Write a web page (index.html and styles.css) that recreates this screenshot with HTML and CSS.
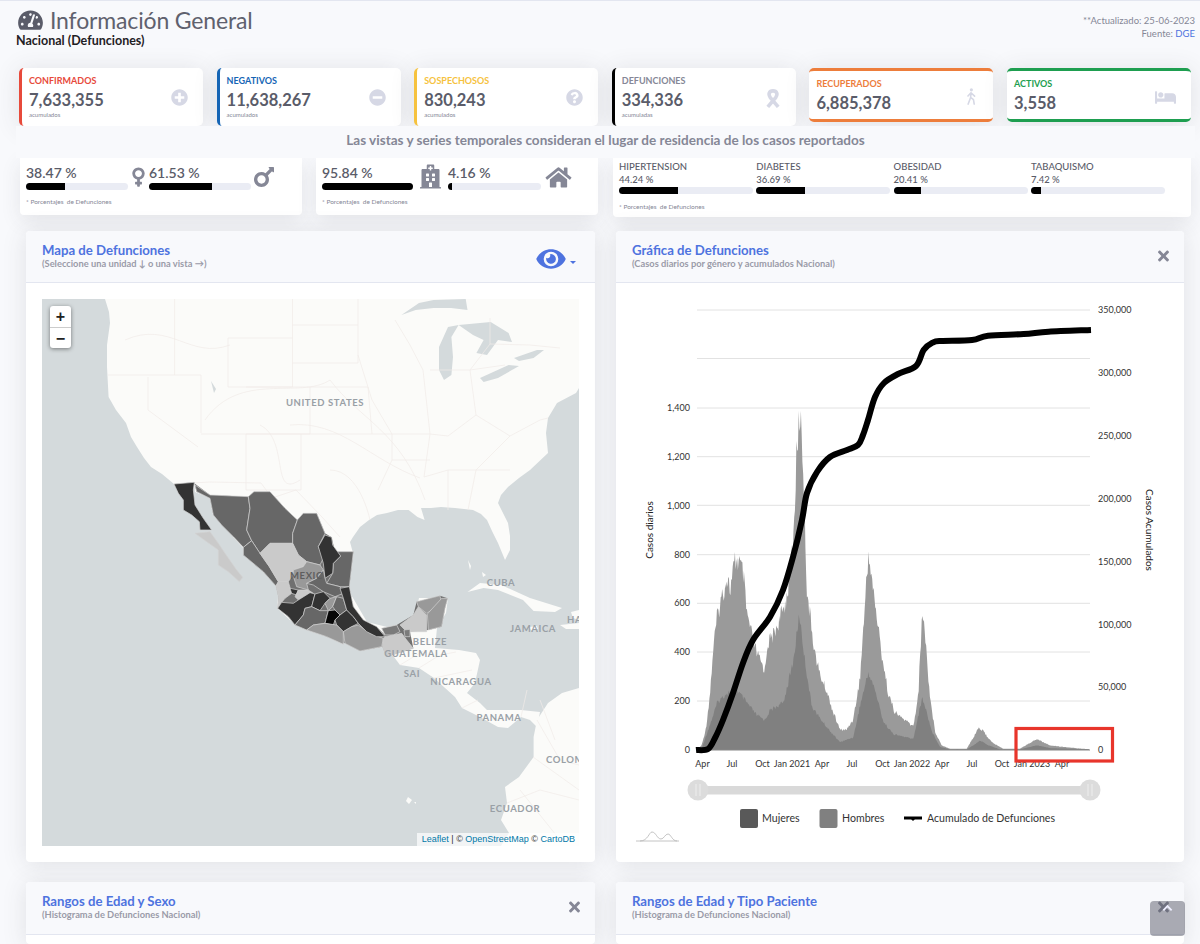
FILE: index.html
```html
<!DOCTYPE html>
<html lang="es">
<head>
<meta charset="utf-8">
<title>Información General</title>
<link rel="stylesheet" href="styles.css">
</head>
<body>
<svg class="sprite" aria-hidden="true">
  <symbol id="i-gauge" viewBox="0 0 576 512"><path d="M288 32C128.94 32 0 160.94 0 320c0 52.8 14.25 102.26 39.06 144.8 5.61 9.62 16.3 15.2 27.44 15.2h443c11.14 0 21.83-5.58 27.44-15.2C561.75 422.26 576 372.8 576 320c0-159.06-128.94-288-288-288zm0 64c14.71 0 26.58 10.13 30.32 23.65-1.11 2.26-2.64 4.23-3.45 6.67l-9.22 27.67c-5.13 3.49-10.97 6.01-17.64 6.01-17.67 0-32-14.33-32-32S270.33 96 288 96zM96 384c-17.67 0-32-14.33-32-32s14.33-32 32-32 32 14.33 32 32-14.33 32-32 32zm48-160c-17.67 0-32-14.33-32-32s14.33-32 32-32 32 14.33 32 32-14.33 32-32 32zm246.77-72.41l-61.33 184C343.13 347.33 352 364.54 352 384c0 11.72-3.38 22.55-8.88 32H232.88c-5.5-9.45-8.88-20.28-8.88-32 0-33.94 26.5-61.43 59.9-63.59l61.34-184.01c4.17-12.56 17.73-19.45 30.36-15.17 12.57 4.19 19.35 17.79 15.17 30.36zm14.66 57.2l15.52-46.55c3.47-1.29 7.13-2.23 11.05-2.23 17.67 0 32 14.33 32 32s-14.33 32-32 32c-11.38-.01-20.89-6.28-26.57-15.22zM480 384c-17.67 0-32-14.33-32-32s14.33-32 32-32 32 14.33 32 32-14.33 32-32 32z"/></symbol>
  <symbol id="i-plus" viewBox="0 0 512 512"><path d="M256 8C119 8 8 119 8 256s111 248 248 248 248-111 248-248S393 8 256 8zm144 276c0 6.6-5.4 12-12 12h-92v92c0 6.6-5.4 12-12 12h-56c-6.6 0-12-5.4-12-12v-92h-92c-6.6 0-12-5.4-12-12v-56c0-6.6 5.4-12 12-12h92v-92c0-6.6 5.4-12 12-12h56c6.6 0 12 5.4 12 12v92h92c6.6 0 12 5.4 12 12v56z"/></symbol>
  <symbol id="i-minus" viewBox="0 0 512 512"><path d="M256 8C119 8 8 119 8 256s111 248 248 248 248-111 248-248S393 8 256 8zM124 296c-6.6 0-12-5.4-12-12v-56c0-6.6 5.4-12 12-12h264c6.6 0 12 5.4 12 12v56c0 6.6-5.4 12-12 12H124z"/></symbol>
  <symbol id="i-question" viewBox="0 0 512 512"><path d="M504 256c0 136.997-111.043 248-248 248S8 392.997 8 256C8 119.083 119.043 8 256 8s248 111.083 248 248zM262.655 90c-54.497 0-89.255 22.957-116.549 63.758-3.536 5.286-2.353 12.415 2.715 16.258l34.699 26.31c5.205 3.947 12.621 3.008 16.665-2.122 17.864-22.658 30.113-35.797 57.303-35.797 20.429 0 45.698 13.148 45.698 32.958 0 14.976-12.363 22.667-32.534 33.976C247.128 238.528 216 254.941 216 296v4c0 6.627 5.373 12 12 12h56c6.627 0 12-5.373 12-12v-1.333c0-28.462 83.186-29.647 83.186-106.667 0-58.002-60.165-106-116.531-106zM256 338c-25.365 0-46 20.635-46 46 0 25.364 20.635 46 46 46s46-20.636 46-46c0-25.365-20.635-46-46-46z"/></symbol>
  <symbol id="i-ribbon" viewBox="0 0 16 20"><path class="stroke-icon" d="M2.500 18.800 L10.800 9 C13.400 5.500 12 2 8 2 C4 2 2.600 5.500 5.200 9 L13.500 18.800"/></symbol>
  <symbol id="i-walk" viewBox="0 0 12 18"><circle cx="6.400" cy="1.900" r="1.700"/><path class="stroke-thin" d="M6 5 L5.600 10 L3 17 M5.600 10 L8.600 12.400 L9.400 17 M6 5 L2.800 8.400 M6 5 L9.800 8.600"/></symbol>
  <symbol id="i-bed" viewBox="0 0 640 512"><path d="M176 256c44.11 0 80-35.89 80-80s-35.89-80-80-80-80 35.89-80 80 35.89 80 80 80zm352-128H304c-8.84 0-16 7.16-16 16v144H64V80c0-8.84-7.16-16-16-16H16C7.16 64 0 71.16 0 80v352c0 8.84 7.16 16 16 16h32c8.84 0 16-7.16 16-16v-48h512v48c0 8.84 7.16 16 16 16h32c8.84 0 16-7.16 16-16V240c0-61.86-50.14-112-112-112z"/></symbol>
  <symbol id="i-venus" viewBox="0 0 288 512"><path d="M288 176c0-79.5-64.5-144-144-144S0 96.5 0 176c0 68.5 47.9 125.9 112 140.4V368H76c-6.6 0-12 5.4-12 12v40c0 6.6 5.4 12 12 12h36v36c0 6.6 5.4 12 12 12h40c6.6 0 12-5.4 12-12v-36h36c6.6 0 12-5.4 12-12v-40c0-6.6-5.4-12-12-12h-36v-51.6c64.1-14.5 112-71.9 112-140.4zm-224 0c0-44.1 35.9-80 80-80s80 35.9 80 80-35.9 80-80 80-80-35.9-80-80z"/></symbol>
  <symbol id="i-mars" viewBox="0 64 384 384"><path d="M372 64h-79c-10.7 0-16 12.9-8.5 20.5l16.9 16.9-80.7 80.7c-22.2-14-48.5-22.1-76.7-22.1C64.5 160 0 224.5 0 304s64.5 144 144 144 144-64.5 144-144c0-28.2-8.1-54.5-22.1-76.7l80.7-80.7 16.9 16.9c7.6 7.6 20.5 2.2 20.5-8.5V76c0-6.6-5.4-12-12-12zM144 384c-44.1 0-80-35.9-80-80s35.9-80 80-80 80 35.9 80 80-35.9 80-80 80z"/></symbol>
  <symbol id="i-hospital" viewBox="0 0 448 512"><path d="M448 492v20H0v-20c0-6.627 5.373-12 12-12h20V120c0-13.255 10.745-24 24-24h88V24c0-13.255 10.745-24 24-24h112c13.255 0 24 10.745 24 24v72h88c13.255 0 24 10.745 24 24v360h20c6.627 0 12 5.373 12 12zM308 192h-40c-6.627 0-12 5.373-12 12v40c0 6.627 5.373 12 12 12h40c6.627 0 12-5.373 12-12v-40c0-6.627-5.373-12-12-12zm-168 64h40c6.627 0 12-5.373 12-12v-40c0-6.627-5.373-12-12-12h-40c-6.627 0-12 5.373-12 12v40c0 6.627 5.373 12 12 12zm104 128h-40c-6.627 0-12 5.373-12 12v84h64v-84c0-6.627-5.373-12-12-12zm64-96h-40c-6.627 0-12 5.373-12 12v40c0 6.627 5.373 12 12 12h40c6.627 0 12-5.373 12-12v-40c0-6.627-5.373-12-12-12zm-116 12c0-6.627-5.373-12-12-12h-40c-6.627 0-12 5.373-12 12v40c0 6.627 5.373 12 12 12h40c6.627 0 12-5.373 12-12v-40zM182 96h26v26a6 6 0 0 0 6 6h20a6 6 0 0 0 6-6V96h26a6 6 0 0 0 6-6V70a6 6 0 0 0-6-6h-26V38a6 6 0 0 0-6-6h-20a6 6 0 0 0-6 6v26h-26a6 6 0 0 0-6 6v20a6 6 0 0 0 6 6z"/></symbol>
  <symbol id="i-home" viewBox="0 0 576 512"><path d="M280.37 148.26L96 300.11V464a16 16 0 0 0 16 16l112.06-.29a16 16 0 0 0 15.92-16V368a16 16 0 0 1 16-16h64a16 16 0 0 1 16 16v95.64a16 16 0 0 0 16 16.05L464 480a16 16 0 0 0 16-16V300L295.67 148.26a12.19 12.19 0 0 0-15.3 0zM571.6 251.47L488 182.56V44.05a12 12 0 0 0-12-12h-56a12 12 0 0 0-12 12v72.61L318.47 43a48 48 0 0 0-61 0L4.34 251.47a12 12 0 0 0-1.6 16.9l25.5 31A12 12 0 0 0 45.15 301l235.22-193.74a12.19 12.19 0 0 1 15.3 0L530.9 301a12 12 0 0 0 16.9-1.6l25.5-31a12 12 0 0 0-1.7-16.93z"/></symbol>
  <symbol id="i-eye" viewBox="0 0 576 512"><path d="M572.52 241.4C518.29 135.59 410.93 64 288 64S57.68 135.64 3.48 241.41a32.35 32.35 0 0 0 0 29.19C57.71 376.41 165.07 448 288 448s230.32-71.64 284.52-177.41a32.35 32.35 0 0 0 0-29.19zM288 400a144 144 0 1 1 144-144 143.93 143.93 0 0 1-144 144zm0-240a95.31 95.31 0 0 0-25.31 3.79 47.85 47.85 0 0 1-66.9 66.9A95.78 95.78 0 1 0 288 160z"/></symbol>
  <symbol id="i-times" viewBox="0 0 352 512"><path d="M242.72 256l100.07-100.07c12.28-12.28 12.28-32.19 0-44.48l-22.24-22.24c-12.28-12.28-32.19-12.28-44.48 0L176 189.28 75.93 89.21c-12.28-12.28-32.19-12.28-44.48 0L9.21 111.45c-12.28 12.28-12.28 32.19 0 44.48L109.28 256 9.21 356.07c-12.28 12.28-12.28 32.19 0 44.48l22.24 22.24c12.28 12.28 32.2 12.28 44.48 0L176 322.72l100.07 100.07c12.28 12.28 32.2 12.28 44.48 0l22.24-22.24c12.28-12.28 12.28-32.19 0-44.48L242.72 256z"/></symbol>
</svg>

<header class="topbar">
  <div>
    <h1 class="page-title"><svg class="title-icon"><use href="#i-gauge"/></svg>Información General</h1>
    <p class="page-sub">Nacional (Defunciones)</p>
  </div>
  <div class="update">
    <p>**Actualizado: 25-06-2023</p>
    <p>Fuente: <a class="link">DGE</a></p>
  </div>
</header>

<section class="kpis">
  <article class="kpi kpi-side red">
    <div><h3>CONFIRMADOS</h3><strong>7,633,355</strong><small>acumulados</small></div>
    <svg class="kpi-icon"><use href="#i-plus"/></svg>
  </article>
  <article class="kpi kpi-side blue">
    <div><h3>NEGATIVOS</h3><strong>11,638,267</strong><small>acumulados</small></div>
    <svg class="kpi-icon"><use href="#i-minus"/></svg>
  </article>
  <article class="kpi kpi-side yellow">
    <div><h3>SOSPECHOSOS</h3><strong>830,243</strong><small>acumulados</small></div>
    <svg class="kpi-icon"><use href="#i-question"/></svg>
  </article>
  <article class="kpi kpi-side black">
    <div><h3>DEFUNCIONES</h3><strong>334,336</strong><small>acumuladas</small></div>
    <svg class="kpi-icon icon-ribbon"><use href="#i-ribbon"/></svg>
  </article>
  <article class="kpi kpi-band orange">
    <div><h3>RECUPERADOS</h3><strong>6,885,378</strong></div>
    <svg class="kpi-icon icon-walk"><use href="#i-walk"/></svg>
  </article>
  <article class="kpi kpi-band green">
    <div><h3>ACTIVOS</h3><strong>3,558</strong></div>
    <svg class="kpi-icon icon-bed"><use href="#i-bed"/></svg>
  </article>
</section>

<p class="banner">Las vistas y series temporales consideran el lugar de residencia de los casos reportados</p>

<section class="breakdowns">
  <article class="mini">
    <div class="split">
      <div class="stat w102"><b>38.47 %</b><div class="bar"><i class="fill" style="width:38.47%"></i></div></div>
      <svg class="g-venus"><use href="#i-venus"/></svg>
      <div class="stat w102"><b>61.53 %</b><div class="bar"><i class="fill" style="width:61.53%"></i></div></div>
      <svg class="g-mars"><use href="#i-mars"/></svg>
    </div>
    <p class="note">* Porcentajes &nbsp;de Defunciones</p>
  </article>
  <article class="mini">
    <div class="split">
      <div class="stat w91"><b>95.84 %</b><div class="bar"><i class="fill" style="width:100%"></i></div></div>
      <svg class="g-hospital"><use href="#i-hospital"/></svg>
      <div class="stat w93"><b>4.16 %</b><div class="bar"><i class="fill" style="width:4.16%"></i></div></div>
      <svg class="g-home"><use href="#i-home"/></svg>
    </div>
    <p class="note">* Porcentajes &nbsp;de Defunciones</p>
  </article>
  <article class="mini mini-wide">
    <div class="comorb">
      <div><h4>HIPERTENSION</h4><span>44.24 %</span><div class="bar"><i class="fill" style="width:44.24%"></i></div></div>
      <div><h4>DIABETES</h4><span>36.69 %</span><div class="bar"><i class="fill" style="width:36.69%"></i></div></div>
      <div><h4>OBESIDAD</h4><span>20.41 %</span><div class="bar"><i class="fill" style="width:20.41%"></i></div></div>
      <div><h4>TABAQUISMO</h4><span>7.42 %</span><div class="bar"><i class="fill" style="width:7.42%"></i></div></div>
    </div>
    <p class="note note-wide">* Porcentajes &nbsp;de Defunciones</p>
  </article>
</section>

<section class="panels">
  <article class="panel">
    <header class="panel-head">
      <div><h2>Mapa de Defunciones</h2><p>(Seleccione una unidad ↓ o una vista →)</p></div>
      <div class="view-btn"><svg class="eye"><use href="#i-eye"/></svg><span class="caret"></span></div>
    </header>
    <div class="panel-body">
      <div class="map">
        <svg class="map-svg" viewBox="42 299 537 547">
          <rect x="42" y="299" width="537" height="547" class="water"/>
          <path class="land" d="M105 299L109 312L110 323L107 345L107 367L108.600 397L116 410L126 423L131 437L137 447L144 458L151 467L162 474L174 484L194 482L195 492L210 498L213 515L233 537L245 550L263 572L278 585L278 597L277 608L290 620L310 628L345 643L360 651L382 647L394 657L400 665L419 668L434 678L455 697L462 708L480 717L498 727L508 728L521 717L530 720L537 727L540 712L521 710L508 710L487 710L480 703L467 693L475 683L480 660L476 653L459 650L435 648L437 628L446 613L448 598L419 598L416 612L405 623L387 627L367 622L353 598L346 587L348 570L353 553L350 542L353 537L360 527L369 520L377 515L387 513L398 510L408.600 510L417.500 517L424.600 520L421 508L431 508L441 507L455 508L473 510L481 514L487 520L492 531L498 543L505 560L510 550L510 536L508 523L498 503L501 495L508 487L519 478L530 470L548 453L546 433L548 418L557 403L576 393L579 388L579 299Z"/>
          <path class="land" d="M579 688L562 693L548 703L537 720L533.600 737L533.600 757L519 777L505 787L507 803L501 820L509 833L501 846L579 846Z"/>
          <path class="land" d="M467.500 592L480 583L501.400 585L530 598L562 608L555 612L533.600 611L523 600L498 590L483.600 588Z"/>
          <path class="land" d="M560 625L579 623L579 629L566 629Z M571 612L579 610L579 620L573 618Z M529 627L537 626L538 629L531 630Z M408 797L412 800L409 804L406 801Z M414 802L416 802L416 804Z M468 560L471 566L470 570Z M482 572L486 575L483 577Z"/>
          <g class="lake">
            <path d="M401.400 315L419 303L433.600 300L465.700 299L467.500 310L451 308L433.600 308L415.700 310Z"/>
            <path d="M448 327L458.600 325L451.400 337L453 357L451.400 375L444 380L439 370L439 347Z"/>
            <path d="M458.600 325L490.700 322L508.600 333L512 342L498 340L487 355L476.400 353L483.600 340L473 335Z"/>
            <path d="M480 378L508.600 365L519 366L498 378L483.600 382Z"/>
            <path d="M514 358L537 350L544 350L533.600 358L519 361Z"/>
            <path d="M211 381L216 389L214 393Z"/>
          </g>
          <g class="borders">
            <path d="M228 338H292.500V387H228Z M246 387H310V434H246V490M301 434V490H246M174.600 299V375M108 375H201V433M148 377V410L198 447M292.500 299V338M292.500 325H358M292.500 363H358V299M310 387H368L372 434H201M358 355L372 400L392 434V460L378 490M372 434H430L424 477M392 460L430 460M430 434L423 370L410 345L395 320M430 370H470L490 344V318M470 370L476 415L448 436L430 434M476 415L510 436M510 436L476 470L468 510M448 470V510M424 477L448 470H510M510 436L540 420L548 418M490 344L530 345L560 348M470 370L505 365"/>
            <path d="M174 484L210 482L261 483L272 498L296 490L322 517L340 537"/>
            <path d="M125 340C170 320 190 360 230 345M205 420C240 370 300 400 330 380C360 420 400 430 425 500M260 425C290 440 270 500 300 480M330 470C360 470 370 520 370 520M290 425C340 420 370 460 420 478"/>
            <path d="M400 665L425 650M419 668L440 655L456 652M434 678L472 670M462 708L478 700M521 717L527 690M537 720L560 760L579 765M533 757L579 790M507 803L540 790L579 800M540 700L555 740M520 790L560 840"/>
          </g>
          <text class="map-label" x="325" y="406" text-anchor="middle">UNITED STATES</text>
          <g transform="translate(150 450) scale(.33333)" class="states">
            <path class="s-base" d="M133 100L180 135L295 140L312 125L360 125L405 175L442 210L460 190L500 190L525 250L545 262L555 305L610 305L598 410L600 425L610 470L640 510L680 530L705 555L740 525L790 495L800 455L870 437L893 445L885 475L875 530L835 540L780 545L790 595L710 620L697 590L630 603L585 580L530 560L480 535L435 525L415 500L383 475L385 440L378 408L340 365L280 315L305 270L250 260L215 225L190 195L180 145L140 125Z"/>
            <path class="s-d" d="M72 102L133 97L130 120L135 165L160 205L185 240L150 240L148 215L125 195L100 180L100 150L85 130Z"/>
            <path class="s-l" d="M135 250L180 245L205 280L225 310L260 360L278 382L268 395L235 365L205 345L205 300L170 275Z"/>
            <path class="s-m" d="M135 105L180 135L295 140L300 175L290 240L305 272L280 292L250 260L215 225L190 195L180 145L140 125Z"/>
            <path class="s-m" d="M312 125L360 125L405 175L442 210L428 250L428 280L360 280L330 310L305 272L290 240L300 175L295 140Z"/>
            <path class="s-m" d="M460 190L500 190L525 250L505 290L520 325L510 345L470 335L445 315L428 280L428 250L442 210Z"/>
            <path class="s-m" d="M555 305L610 305L598 410L570 410L530 400L548 370L550 340L572 318Z"/>
            <path class="s-d" d="M525 255L545 262L548 285L572 318L550 340L548 370L525 385L520 340L505 290Z"/>
            <path class="s-m" d="M305 272L330 310L358 350L385 395L378 408L340 365L280 315L280 292Z"/>
            <path class="s-l" d="M360 280L428 280L445 315L470 335L460 350L430 360L425 380L415 395L385 395L358 350L330 310Z"/>
            <path class="s-g" d="M470 335L510 345L520 360L500 385L470 400L475 420L440 410L432 385L430 360L460 350Z"/>
            <path class="s-m" d="M520 360L525 385L530 400L570 410L580 430L555 440L520 425L490 405L470 400L500 385Z"/>
            <path class="s-l" d="M385 395L415 395L425 430L405 445L395 457L383 475L385 440L378 408Z"/>
            <path class="s-d" d="M420 415L445 420L440 435L425 430Z"/>
            <path class="s-l" d="M445 420L475 420L490 430L445 450L435 440Z"/>
            <path class="s-d" d="M383 475L395 457L430 460L445 450L480 428L495 432L485 470L465 475L460 495L435 525L415 500Z"/>
            <path class="s-d" d="M495 432L520 425L540 445L525 460L510 482L485 470Z"/>
            <path class="s-g" d="M525 460L540 445L560 440L548 470L535 482Z"/>
            <path class="s-m" d="M548 470L560 440L580 445L590 480L570 495L555 480Z"/>
            <path class="s-m" d="M465 475L485 470L510 482L535 482L525 520L490 525L470 540L435 525L460 495Z"/>
            <path class="s-k" d="M525 520L535 482L555 480L570 495L555 510L550 525Z"/>
            <path class="s-d" d="M570 495L590 480L610 500L625 520L605 530L580 545L560 525L555 510Z"/>
            <path class="s-g" d="M470 540L490 525L525 520L560 525L580 545L580 583L530 560Z"/>
            <path class="s-g" d="M580 545L605 530L625 525L660 550L700 565L695 590L630 603L585 580Z"/>
            <path class="s-d" d="M570 415L598 410L610 470L640 510L680 530L705 560L680 560L650 545L625 520L610 500L590 480L580 445Z"/>
            <path class="s-b" d="M695 535L740 525L750 545L730 555L705 555Z"/>
            <path class="s-l" d="M705 560L730 555L755 550L770 570L790 595L710 620L697 590L700 565Z"/>
            <path class="s-l" d="M750 525L790 495L805 470L830 495L830 545L780 545L765 540Z"/>
            <path class="s-g" d="M800 455L870 437L875 460L830 490L805 470Z"/>
            <path class="s-g" d="M875 445L893 445L885 475L875 530L835 540L832 492Z"/>
            <path class="s-b" d="M762 540L780 538L780 560L765 560Z"/>
          </g>
          <text class="map-label mex" x="290" y="579">MEXIC</text>
          <text class="map-label" x="501" y="586" text-anchor="middle">CUBA</text>
          <text class="map-label" x="533" y="632" text-anchor="middle">JAMAICA</text>
          <text class="map-label" x="567" y="623">HA</text>
          <text class="map-label" x="430" y="645" text-anchor="middle">BELIZE</text>
          <text class="map-label" x="416" y="657" text-anchor="middle">GUATEMALA</text>
          <text class="map-label" x="412" y="677" text-anchor="middle">SAI</text>
          <text class="map-label" x="461" y="685" text-anchor="middle">NICARAGUA</text>
          <text class="map-label" x="499" y="721" text-anchor="middle">PANAMA</text>
          <text class="map-label" x="546" y="763">COLOM</text>
          <text class="map-label" x="515" y="812" text-anchor="middle">ECUADOR</text>
        </svg>
        <div class="zoom-ctl"><button>+</button><button>−</button></div>
        <div class="attribution"><a>Leaflet</a> | © <a>OpenStreetMap</a> © <a>CartoDB</a></div>
      </div>
    </div>
  </article>

  <article class="panel">
    <header class="panel-head">
      <div><h2>Gráfica de Defunciones</h2><p>(Casos diarios por género y acumulados Nacional)</p></div>
      <svg class="close"><use href="#i-times"/></svg>
    </header>
    <div class="panel-chart">
      <svg class="chart-svg" viewBox="616 283 568 579">
        <g class="grid">
          <path d="M697 310H1090M697 358.500H1090M697 408H1090M697 456.700H1090M697 505.300H1090M697 554.700H1090M697 603.300H1090M697 652H1090M697 701H1090"/>
        </g>
        <path id="area-men" class="area-men"/>
        <path id="area-women" class="area-women"/>
        <path class="baseline" d="M697 750H1090"/>
        <path id="cum-line" class="cum-line"/>
        <g class="tick end">
          <text x="690" y="411">1,400</text><text x="690" y="460">1,200</text><text x="690" y="509">1,000</text><text x="690" y="558">800</text><text x="690" y="606">600</text><text x="690" y="655">400</text><text x="690" y="704">200</text><text x="690" y="753">0</text>
        </g>
        <g class="tick">
          <text x="1098" y="313">350,000</text><text x="1098" y="376">300,000</text><text x="1098" y="439">250,000</text><text x="1098" y="502">200,000</text><text x="1098" y="565">150,000</text><text x="1098" y="628">100,000</text><text x="1098" y="690">50,000</text><text x="1098" y="753">0</text>
        </g>
        <g class="tick mid">
          <text x="702.500" y="767">Apr</text><text x="732" y="767">Jul</text><text x="762.500" y="767">Oct</text><text x="792" y="767">Jan 2021</text><text x="822" y="767">Apr</text><text x="852" y="767">Jul</text><text x="882.500" y="767">Oct</text><text x="912" y="767">Jan 2022</text><text x="942" y="767">Apr</text><text x="972" y="767">Jul</text><text x="1002" y="767">Oct</text><text x="1032" y="767">Jan 2023</text><text x="1062" y="767">Apr</text>
        </g>
        <text class="axis-title" transform="translate(653 530) rotate(-90)">Casos diarios</text>
        <text class="axis-title" transform="translate(1146 530) rotate(90)">Casos Acumulados</text>
        <rect class="flag" x="1016" y="728.500" width="96.500" height="32.500"/>
        <rect class="track" x="706" y="786" width="376" height="8.500"/>
        <g class="handle">
          <circle cx="698" cy="790" r="10.500"/><path d="M696 784V796M700 784V796"/>
          <circle cx="1090" cy="790" r="10.500"/><path d="M1088 784V796M1092 784V796"/>
        </g>
        <rect class="sw-women" x="740" y="809" width="18" height="19" rx="2"/>
        <text class="legend" x="762" y="822">Mujeres</text>
        <rect class="sw-men" x="819.500" y="809" width="18" height="19" rx="2"/>
        <text class="legend" x="842" y="822">Hombres</text>
        <path class="sw-line" d="M904 818H922"/>
        <path class="sw-mark" d="M910 818H916L913 821Z"/>
        <text class="legend" x="927" y="822">Acumulado de Defunciones</text>
        <path class="am-logo" d="M636 841H679M640 841C648 841 649 832 652 832C656 832 657 839 661 839C664 839 665 834 668 834C671 834 672 841 677 841"/>
      </svg>
    </div>
  </article>

  <article class="panel panel-short">
    <header class="panel-head">
      <div><h2>Rangos de Edad y Sexo</h2><p>(Histograma de Defunciones Nacional)</p></div>
      <svg class="close"><use href="#i-times"/></svg>
    </header>
  </article>
  <article class="panel panel-short">
    <header class="panel-head">
      <div><h2>Rangos de Edad y Tipo Paciente</h2><p>(Histograma de Defunciones Nacional)</p></div>
      <svg class="close"><use href="#i-times"/></svg>
    </header>
  </article>
</section>

<a class="to-top"><svg viewBox="0 0 12 8"><path d="M1.500 6.500L6 2L10.500 6.500"/></svg></a>
<script src="chart.js"></script>
</body>
</html>
```

FILE: styles.css
```css
* { box-sizing: border-box; }
html, body { margin: 0; height: 944px; overflow: hidden; }
body { background: #f8f9fc; font-family: "Lato", "Noto Sans", sans-serif; color: #5a5c69; }
h1, h2, h3, h4, p { margin: 0; }
svg { fill: currentColor; display: block; }
.sprite { display: none; }
.stroke-icon { fill: none; stroke: currentColor; stroke-width: 3.800; }
.stroke-thin { fill: none; stroke: currentColor; stroke-width: 1.700; stroke-linecap: round; stroke-linejoin: round; }

/* top */
.topbar { height: 68px; border-top: 1px solid #e3e6f0; padding: 6px 5px 0 16px; display: flex; justify-content: space-between; align-items: flex-start; }
.page-title { font-size: 23px; line-height: 26px; font-weight: 400; letter-spacing: -.15px; color: #5f616e; display: flex; align-items: center; padding-left: 2px; }
.title-icon { width: 25px; height: 22px; margin-right: 7px; color: #5a5c69; }
.page-sub { font-size: 12.500px; line-height: 16px; font-weight: 700; color: #1f2024; }
.update { text-align: right; font-size: 9.500px; line-height: 13px; color: #858796; padding-top: 7px; }
.link { color: #4e73df; }

/* kpi */
.kpis { display: grid; grid-template-columns: repeat(6, 184px); column-gap: 13.600px; margin-left: 19px; height: 58px; align-items: start; }
.kpi { background: #fff; border-radius: 5px; box-shadow: 0 2px 24px rgba(58, 59, 69, .13); display: flex; justify-content: space-between; align-items: flex-start; }
.kpi-side { height: 58px; border-left: 3px solid; padding: 7px 15px 0 7px; }
.kpi-band { height: 54px; border-top: 3px solid; border-bottom: 3px solid; padding: 7px 13px 0 7px; }
.kpi h3 { font-size: 9px; line-height: 11px; font-weight: 700; }
.kpi strong { display: block; font-size: 16.500px; line-height: 22px; font-weight: 700; color: #5a5c69; margin-top: 3px; }
.kpi small { display: block; font-size: 6px; line-height: 8px; color: #858796; }
.kpi-icon { width: 17px; height: 17px; color: #d6d8e5; margin-top: 14px; }
.red { border-color: #e74a3b; } .red h3 { color: #e74a3b; }
.blue { border-color: #1565b5; } .blue h3 { color: #1565b5; }
.yellow { border-color: #f6c23e; } .yellow h3 { color: #f6c23e; }
.black { border-color: #000; } .black h3 { color: #858796; }
.orange { border-color: #ed7d3b; } .orange h3 { color: #ed7d3b; }
.green { border-color: #1e9e50; } .green h3 { color: #1e9e50; }
.icon-ribbon { width: 16px; height: 19px; margin-top: 14px; }
.icon-walk { width: 12px; height: 17px; margin-top: 10px; margin-right: 3px; }
.icon-bed { width: 21px; height: 17px; margin-top: 11px; margin-right: 2px; }

.banner { margin: 0 5px 0 16px; height: 32px; background: #f8f9fc; text-align: center; font-size: 13.550px; line-height: 28px; font-weight: 700; color: #858796; position: relative; }

/* breakdown */
.breakdowns { display: grid; grid-template-columns: 282px 282px 579px; column-gap: 14px; margin-left: 20px; height: 59px; align-items: start; }
.mini { background: #fff; height: 57px; border-radius: 0 0 4px 4px; box-shadow: 0 6px 20px rgba(58, 59, 69, .1); padding: 6px 6px 0; }
.mini-wide { height: 59px; margin-left: 1px; padding: 2px 6px 0; }
.split { display: flex; align-items: flex-start; height: 26px; }
.stat b { display: block; font-size: 14px; line-height: 18px; font-weight: 600; color: #5a5c69; }
.w102 { width: 102px; } .w91 { width: 91px; } .w93 { width: 93px; }
.bar { height: 6.500px; background: #eaecf4; border-radius: 4px; overflow: hidden; margin-top: 1px; }
.fill { display: block; height: 100%; background: #000; }
.g-venus { width: 15px; height: 22px; color: #858796; margin: 2px 3px 0; flex: none; }
.g-mars { width: 20px; height: 20px; color: #858796; margin: 3px 0 0 3px; flex: none; }
.g-hospital { width: 21px; height: 25px; color: #858796; margin: 0 7px; flex: none; }
.g-home { width: 29px; height: 23px; color: #858796; margin: 2px 0 0 3px; flex: none; }
.note { font-size: 6.500px; line-height: 9px; color: #858796; margin-top: 7px; }
.note-wide { margin-top: 8px; }
.comorb { display: grid; grid-template-columns: repeat(4, 134px); column-gap: 3.300px; }
.comorb h4 { font-size: 9.500px; line-height: 13px; font-weight: 500; color: #5a5c69; }
.comorb span { display: block; font-size: 9.500px; line-height: 13px; font-weight: 500; color: #5a5c69; }
.comorb .bar { margin-top: 1px; }

/* panels */
.panels { display: grid; grid-template-columns: 569px 568px; column-gap: 21px; row-gap: 20px; margin: 14px 0 0 26px; grid-template-rows: 631px 62px; }
.panel { background: #fff; border-radius: 4px; box-shadow: 0 2px 24px rgba(58, 59, 69, .13); overflow: hidden; display: flex; flex-direction: column; }
.panel-head { height: 52px; flex: none; background: #f8f9fc; border-bottom: 1px solid #e3e6f0; padding: 11px 16px 0; display: flex; justify-content: space-between; align-items: flex-start; }
.panel-head h2 { font-size: 13.200px; line-height: 17px; font-weight: 700; color: #4e73df; }
.panel-head p { font-size: 9.300px; line-height: 9px; font-weight: 700; color: #9a9ba8; }
.panel-short .panel-head { height: 53px; }
.close { width: 11px; height: 16px; color: #858796; margin: 6px -1px 0 0; }
.view-btn { display: flex; align-items: flex-end; color: #4e73df; margin: 4px 3px 0 0; }
.eye { width: 30px; height: 26px; }
.caret { width: 0; height: 0; border: 3px solid transparent; border-top: 3px solid #4e73df; border-bottom: 0; margin: 0 0 8px 4px; }
.panel-body { padding: 16px; flex: 1; }
.map { position: relative; width: 537px; height: 547px; overflow: hidden; }
.map-svg { width: 537px; height: 547px; }
.water { fill: #d4dadc; }
.land { fill: #fbfbf9; }
.lake path { fill: #d4dadc; }
.borders { fill: none; stroke: #f0ebe8; stroke-width: .7; }
.states path { stroke: #d2d2d2; stroke-width: .7; vector-effect: non-scaling-stroke; stroke-linejoin: round; }
.states .s-base { fill: #707070; stroke: none; }
.s-k { fill: #060606; } .s-d { fill: #333; } .s-m { fill: #676767; } .s-b { fill: #7b7b7b; } .s-g { fill: #999; } .s-l { fill: #cacaca; }
.map-label { font-family: "Lato", sans-serif; font-size: 9.500px; font-weight: 700; letter-spacing: .6px; fill: #99a0a6; }
.map-label.mex { fill: #5e5e5e; }
.zoom-ctl { position: absolute; left: 8px; top: 7px; width: 21px; background: #fff; border-radius: 3px; box-shadow: 0 1px 4px rgba(0, 0, 0, .45); }
.zoom-ctl button { display: block; width: 21px; height: 21px; border: 0; background: none; padding: 0; font: 700 16px/21px "Liberation Sans", sans-serif; color: #222; }
.zoom-ctl button + button { border-top: 1px solid #ccc; }
.attribution { position: absolute; right: 0; bottom: 0; height: 13px; padding: 0 4px 0 5px; background: rgba(255, 255, 255, .7); font: 9px/13px "Liberation Sans", sans-serif; color: #333; white-space: nowrap; }
.attribution a { color: #0078a8; }
.panel-chart { flex: 1; }
.chart-svg { width: 568px; height: 579px; }
.grid { fill: none; stroke: #e2e2e2; stroke-width: 1; }
.area-men { fill: #9a9a9a; }
.area-women { fill: #808080; }
.baseline { stroke: #888; stroke-width: 1; fill: none; }
.cum-line { fill: none; stroke: #000; stroke-width: 6; stroke-linejoin: round; }
.tick text { font-size: 9px; fill: #333; }
.tick.end text { text-anchor: end; }
.tick.mid text { text-anchor: middle; }
.axis-title { font-size: 10px; fill: #222; text-anchor: middle; }
.flag { fill: none; stroke: #e8352b; stroke-width: 3.200; }
.track { fill: #d9d9d9; }
.handle circle { fill: #dcdcdc; }
.handle path { stroke: #eee; fill: none; stroke-width: 1; }
.sw-women { fill: #595959; }
.sw-men { fill: #808080; }
.sw-line { stroke: #000; stroke-width: 3; fill: none; }
.sw-mark { fill: #000; }
.legend { font-size: 10.600px; fill: #333; }
.am-logo { fill: none; stroke: #b5b5b5; stroke-width: .8; }

.to-top { position: fixed; right: 15px; bottom: 8px; width: 35px; height: 35px; border-radius: 4px; background: rgba(90, 92, 105, .5); }
.to-top svg { width: 11px; height: 8px; margin: 3px auto 0; fill: none; stroke: #eef; stroke-width: 2; }
```

FILE: chart.js
```js
// Builds the daily series and the cumulative curve of the deaths chart.
(function () {
  var BASE = 750;
  function real(p) { return [630 + p[0] / 3, 340 + p[1] / 3]; }
  function noise(i) { var s = Math.sin(i * 12.9898) * 43758.5453; return s - Math.floor(s); }

  var men = [[200,1229],[215,1215],[228,1160],[240,1050],[250,900],[262,800],[275,740],[293,670],[300,720],[315,625],[325,620],[340,670],[350,790],[365,860],[380,920],[405,975],[412,890],[430,860],[450,810],[470,740],[490,560],[500,280],[510,135],[520,320],[530,700],[540,800],[555,920],[570,990],[590,1040],[610,1110],[630,1165],[650,1165],[670,1130],[690,1000],[705,760],[716,590],[725,680],[740,800],[755,920],[775,1050],[795,1110],[820,1130],[850,1155],[865,1050],[875,830],[880,790],[888,900],[900,1060],[915,1170],[935,1215],[960,1226],[1010,1226],[1030,1190],[1045,1158],[1060,1170],[1085,1205],[1120,1226],[1170,1226],[1195,1210],[1220,1195],[1260,1215],[1300,1220],[1378,1228]].map(real);
  var women = [[200,1229],[215,1225],[240,1150],[262,1080],[290,1050],[320,1040],[350,1080],[380,1120],[405,1135],[420,1105],[460,1080],[490,950],[508,800],[525,950],[545,1090],[570,1130],[600,1170],[630,1205],[670,1190],[690,1090],[715,985],[735,1040],[760,1140],[790,1180],[850,1195],[865,1120],[877,1065],[890,1110],[905,1170],[930,1220],[960,1228],[1010,1228],[1030,1215],[1050,1200],[1075,1215],[1110,1228],[1170,1228],[1220,1215],[1260,1224],[1378,1228]].map(real);

  function jagged(points, amount) {
    var d = 'M' + points[0][0] + ' ' + BASE, seg = 0, i = 0;
    for (var x = points[0][0]; x <= points[points.length - 1][0]; x += 0.75) {
      while (seg < points.length - 2 && x > points[seg + 1][0]) seg++;
      var a = points[seg], b = points[seg + 1];
      var y = a[1] + (b[1] - a[1]) * (x - a[0]) / (b[0] - a[0]);
      var h = BASE - y;
      h *= 1 - amount * noise(i++);
      d += 'L' + x.toFixed(1) + ' ' + (BASE - h).toFixed(1);
    }
    return d + 'L' + points[points.length - 1][0] + ' ' + BASE + 'Z';
  }

  document.getElementById('area-men').setAttribute('d', jagged(men, 0.13));
  document.getElementById('area-women').setAttribute('d', jagged(women, 0.1));

  var cum = [[696,750],[708,749],[715,738],[723,720],[733,693],[743,663],[753,640],[770,617],[783,590],[793,557],[802,520],[807,493],[817,472],[830,457],[847,450],[858,445],[863,435],[868,420],[875,397],[884,383],[898,374],[916,366],[923.6,350],[932.5,342.7],[941,341],[972,340],[988,335.7],[1023.6,334],[1048.6,331.7],[1091,330]];
  var path = 'M' + cum[0].join(' ');
  for (var i = 0; i < cum.length - 1; i++) {
    var p0 = cum[Math.max(i - 1, 0)], p1 = cum[i], p2 = cum[i + 1], p3 = cum[Math.min(i + 2, cum.length - 1)];
    path += 'C' + (p1[0] + (p2[0] - p0[0]) / 6).toFixed(1) + ' ' + (p1[1] + (p2[1] - p0[1]) / 6).toFixed(1) + ' ' +
      (p2[0] - (p3[0] - p1[0]) / 6).toFixed(1) + ' ' + (p2[1] - (p3[1] - p1[1]) / 6).toFixed(1) + ' ' + p2[0] + ' ' + p2[1];
  }
  document.getElementById('cum-line').setAttribute('d', path);
})();
```
